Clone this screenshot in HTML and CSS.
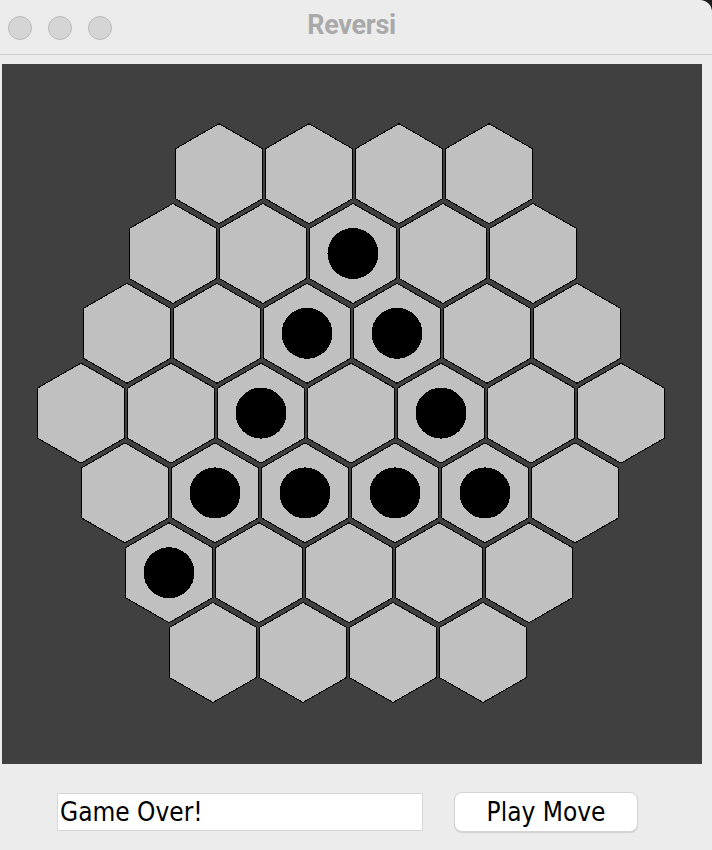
FILE: index.html
```html
<!DOCTYPE html>
<html lang="en">
<head>
    <meta charset="UTF-8">
    <meta name="viewport" content="width=device-width, initial-scale=1.0">
    <title>Reversi</title>
    <link rel="stylesheet" href="styles.css">
</head>
<body>
    <div class="window">
        <header class="titlebar">
            <div class="lights">
                <span class="light"></span>
                <span class="light"></span>
                <span class="light"></span>
            </div>
            <h1 class="title">Reversi</h1>
            <div></div>
        </header>

        <main class="content">
            <svg id="board" class="board" width="700" height="700" viewBox="2 64 700 700"></svg>

            <div class="controls">
                <div class="status">Game Over!</div>
                <button class="play-btn">Play Move</button>
            </div>
        </main>
    </div>

    <script>
        const board = document.getElementById('board');
        const svgNS = 'http://www.w3.org/2000/svg';

        // cells per row, top to bottom
        const rows = [4, 5, 6, 7, 6, 5, 4];
        // black discs, "row,col"
        const pieces = ['1,2', '2,2', '2,3', '3,2', '3,4', '4,1', '4,2', '4,3', '4,4', '5,0'];

        const halfW = 43.5;
        const halfH = 50;
        const shoulder = 25;

        rows.forEach((count, r) => {
            const cy = 173.7 + 79.8 * r;
            const rowCenter = 351 - (r - 3);
            for (let i = 0; i < count; i++) {
                const cx = rowCenter + 90 * (i - (count - 1) / 2);
                const hex = document.createElementNS(svgNS, 'polygon');
                const pts = [
                    [cx, cy - halfH],
                    [cx + halfW, cy - shoulder],
                    [cx + halfW, cy + shoulder],
                    [cx, cy + halfH],
                    [cx - halfW, cy + shoulder],
                    [cx - halfW, cy - shoulder]
                ];
                hex.setAttribute('points', pts.map(p => p.join(',')).join(' '));
                hex.setAttribute('class', 'cell');
                board.appendChild(hex);

                if (pieces.includes(r + ',' + i)) {
                    const disc = document.createElementNS(svgNS, 'circle');
                    disc.setAttribute('cx', cx);
                    disc.setAttribute('cy', cy);
                    disc.setAttribute('r', 25.5);
                    disc.setAttribute('class', 'disc');
                    board.appendChild(disc);
                }
            }
        });
    </script>
</body>
</html>
```

FILE: styles.css
```css
* {
    box-sizing: border-box;
    margin: 0;
    padding: 0;
}

html, body {
    background-color: #1e1e1e;
}

body {
    font-family: 'DejaVu Sans Condensed', 'DejaVu Sans', sans-serif;
    color: #000;
}

.window {
    width: 712px;
    height: 850px;
    background-color: #ececec;
    border-top-right-radius: 12px;
    overflow: hidden;
}

.titlebar {
    height: 55px;
    display: grid;
    grid-template-columns: 1fr auto 1fr;
    align-items: center;
    padding: 0 8px;
    border-bottom: 1px solid #cfcfcf;
}

.lights {
    display: flex;
    gap: 16px;
    padding-top: 2px;
}

.light {
    width: 24px;
    height: 24px;
    border-radius: 50%;
    background-color: #d5d5d5;
    border: 1px solid #bababa;
}

.title {
    font-family: Roboto, 'Liberation Sans', sans-serif;
    font-weight: bold;
    font-size: 27px;
    letter-spacing: -0.3px;
    color: #a9a9a9;
    margin-right: 9px;
    padding-bottom: 4px;
}

.content {
    padding: 9px 0 0 2px;
}

.board {
    display: block;
    background-color: #404040;
}

.cell {
    fill: #c0c0c0;
    stroke: #000;
    stroke-width: 1;
    shape-rendering: crispEdges;
}

.disc {
    fill: #000;
    shape-rendering: crispEdges;
}

.controls {
    display: flex;
    align-items: center;
    gap: 31px;
    padding: 28px 0 0 55px;
}

.status {
    width: 366px;
    height: 38px;
    background-color: #fff;
    border: 1px solid #d6d6d6;
    font-size: 26px;
    line-height: 36px;
    padding-left: 2px;
}

.play-btn {
    width: 184px;
    height: 40px;
    font-family: inherit;
    font-size: 26px;
    background-color: #fff;
    border: 1px solid #d3d3d3;
    border-radius: 8px;
    box-shadow: 0 1px 1px rgba(0, 0, 0, 0.12);
    color: #000;
}
```
